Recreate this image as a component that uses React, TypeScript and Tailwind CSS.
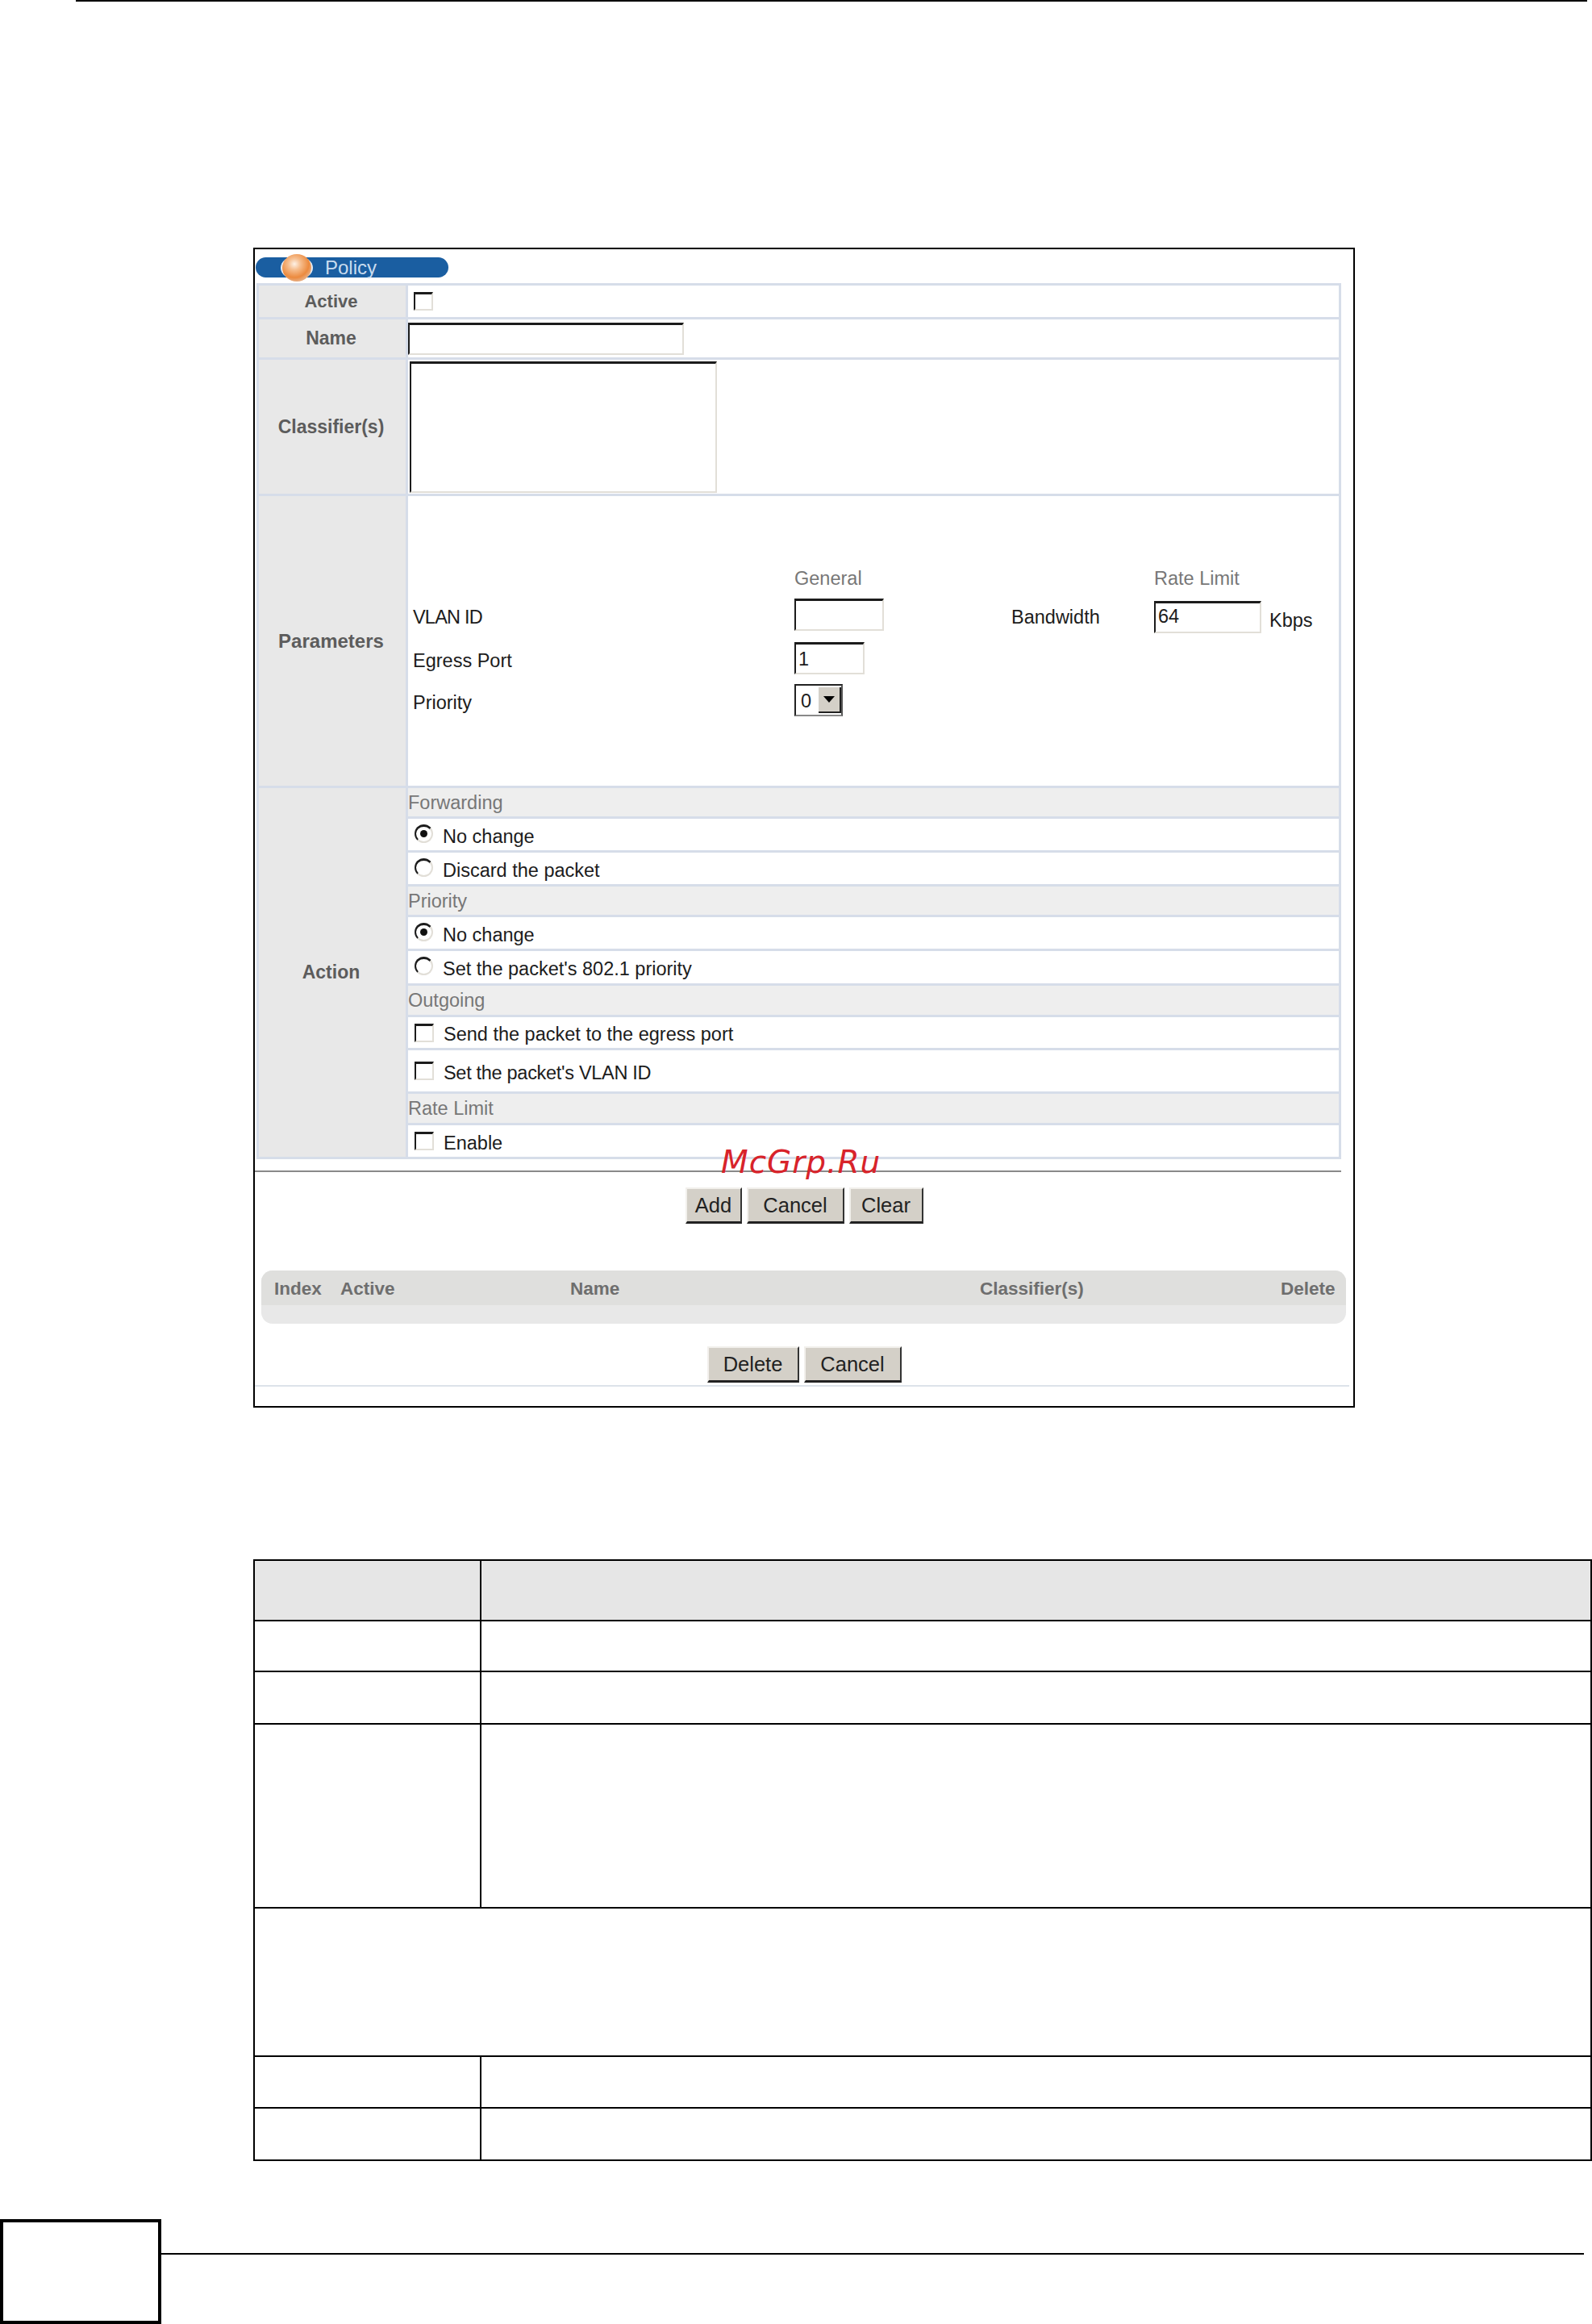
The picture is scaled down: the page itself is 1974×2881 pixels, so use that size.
const rowText = "mt-[6px] text-[23.5px] text-[#1c1c1c]";

const insetBorder = "border-2 border-t-[3px] border-t-[#1c1c1c] border-l-[#1c1c1c] border-r-[#e2dfd8] border-b-[#e2dfd8] bg-white";

function Label({ text, size = "text-[23px]" }: { text: string; size?: string }) {
  return (
    <div className={`flex w-[182px] shrink-0 items-center justify-center bg-[#e8e8e8] pr-[3px] font-bold text-[#5c5c5c] ${size}`}>
      {text}
    </div>
  );
}

function Checkbox() {
  return <div className={`h-[23px] w-[24px] shrink-0 ${insetBorder}`} />;
}

function Radio({ checked = false }: { checked?: boolean }) {
  return (
    <div className={`mb-[3px] flex h-[23px] w-[23px] shrink-0 items-center justify-center rounded-full ${insetBorder}`}>
      {checked && <div className="h-[9px] w-[9px] rounded-full bg-[#111111]" />}
    </div>
  );
}

function ActionHeader({ text, h }: { text: string; h: string }) {
  return <div className={`flex items-center bg-[#eeeeee] pt-[2px] text-[23.5px] text-[#777777] ${h}`}>{text}</div>;
}

function ActionOption({ text, h, radio, checked, tight }: { text: string; h: string; radio?: boolean; checked?: boolean; tight?: boolean }) {
  return (
    <div className={`flex items-center gap-[12px] bg-white pl-[8px] ${h}`}>
      {radio ? <Radio checked={checked} /> : <Checkbox />}
      <span className={`${rowText} ${tight ? "tracking-[-0.3px]" : ""}`}>{text}</span>
    </div>
  );
}

function TextBox({ w, value, low }: { w: string; value?: string; low?: boolean }) {
  return (
    <div className={`flex h-[40px] items-center pl-[3px] text-[23.5px] leading-none text-[#1c1c1c] ${low ? "pt-[3px]" : ""} ${w} ${insetBorder}`}>
      {value}
    </div>
  );
}

function FormButton({ text, w }: { text: string; w: string }) {
  return (
    <div className={`flex h-[45px] items-center justify-center border-t-2 border-r-2 border-b-[3px] border-l-2 border-t-[#f2f0ec] border-r-[#333333] border-b-[#222222] border-l-[#f2f0ec] bg-[#d4d0c8] text-[25.5px] text-[#222222] ${w}`}>
      {text}
    </div>
  );
}

function PolicyBall() {
  return (
    <svg width="40" height="34" viewBox="0 0 40 34" className="-my-[5px] shrink-0">
      <defs>
        <radialGradient id="ball" cx="0.42" cy="0.36" r="0.62">
          <stop offset="0" stopColor="#fdf1e6" />
          <stop offset="0.35" stopColor="#f6bd8d" />
          <stop offset="0.8" stopColor="#ec8a3e" />
          <stop offset="1" stopColor="#e8a878" />
        </radialGradient>
      </defs>
      <ellipse cx="20" cy="17" rx="20" ry="15" fill="#e6edf5" />
      <ellipse cx="20" cy="17" rx="18" ry="17" fill="url(#ball)" />
    </svg>
  );
}

const specRows = [
  { h: "h-[75px]", header: true },
  { h: "h-[63px]" },
  { h: "h-[65px]" },
  { h: "h-[228px]" },
  { h: "h-[184px]", span: true },
  { h: "h-[64px]" },
  { h: "h-[63px]", last: true },
];

export default function App() {
  return (
    <div className="flex h-[2881px] w-[1974px] flex-col overflow-hidden bg-white font-['Liberation_Sans',Arial,sans-serif]">
      {/* Page rule */}
      <div className="ml-[94px] h-[2px] w-[1874px] shrink-0 bg-black" />

      {/* Screenshot frame */}
      <div className="relative mt-[305px] ml-[314px] flex h-[1438px] w-[1366px] shrink-0 flex-col border-2 border-black">
        <div className="mt-[10px] ml-[1px] flex h-[25px] w-[239px] items-center rounded-full bg-[#1a5ea1] pl-[31px]">
          <PolicyBall />
          <span className="ml-[15px] text-[24px] leading-none text-[#c9dcef]">Policy</span>
        </div>

        {/* Policy form */}
        <div className="mt-[7px] ml-[2px] flex w-[1345px] flex-col gap-[3px] bg-[#d6dde9] p-[3px]">
          <div className="flex h-[39px] gap-[3px]">
            <Label text="Active" size="text-[22px]" />
            <div className="flex flex-1 items-center bg-white pl-[7px]">
              <Checkbox />
            </div>
          </div>
          <div className="flex h-[47px] gap-[3px]">
            <Label text="Name" />
            <div className="flex flex-1 items-center bg-white">
              <TextBox w="w-[342px]" />
            </div>
          </div>
          <div className="flex h-[166px] gap-[3px]">
            <Label text="Classifier(s)" />
            <div className="flex flex-1 items-center bg-white pl-[2px]">
              <div className={`h-[163px] w-[381px] ${insetBorder}`} />
            </div>
          </div>
          <div className="flex h-[359px] gap-[3px]">
            <Label text="Parameters" size="text-[24px]" />
            <div className="grid flex-1 grid-cols-[473px_269px_177px_1fr] grid-rows-[46px_54px_52px_40px] items-start bg-white pt-[81px] pl-[6px] text-[23.5px] text-[#1c1c1c]">
              <div />
              <div className="flex h-[42px] items-center pt-[2px] text-[#777777]">General</div>
              <div />
              <div className="flex h-[42px] items-center pt-[2px] text-[#777777]">Rate Limit</div>

              <div className="flex h-[44px] items-center pt-[4px] tracking-[-0.8px]">VLAN ID</div>
              <TextBox w="w-[111px]" />
              <div className="flex h-[44px] items-center pt-[4px]">Bandwidth</div>
              <div className="flex items-center gap-[10px]">
                <TextBox w="w-[133px]" value="64" />
                <span className="mt-[10px]">Kbps</span>
              </div>

              <div className="flex h-[44px] items-center pt-[4px]">Egress Port</div>
              <TextBox w="w-[87px]" value="1" low />
              <div />
              <div />

              <div className="flex h-[44px] items-center pt-[4px]">Priority</div>
              <div className="flex h-[40px] w-[60px] items-center justify-between border-2 border-t-[#222222] border-r-[#555555] border-b-[#888888] border-l-[#222222] bg-white pl-[6px]">
                <span className="pt-[3px] leading-none">0</span>
                <div className="flex h-[32px] w-[28px] items-center justify-center border-r-2 border-b-2 border-r-[#222222] border-b-[#222222] bg-[#d4d0c8]">
                  <div className="h-0 w-0 border-x-[7px] border-t-[8px] border-x-transparent border-t-black" />
                </div>
              </div>
              <div />
              <div />
            </div>
          </div>
          <div className="flex gap-[3px]">
            <Label text="Action" />
            <div className="flex flex-1 flex-col gap-[3px]">
              <ActionHeader text="Forwarding" h="h-[35px]" />
              <ActionOption text="No change" h="h-[39px]" radio checked />
              <ActionOption text="Discard the packet" h="h-[39px]" radio />
              <ActionHeader text="Priority" h="h-[35px]" />
              <ActionOption text="No change" h="h-[39px]" radio checked />
              <ActionOption text="Set the packet's 802.1 priority" h="h-[40px]" radio />
              <ActionHeader text="Outgoing" h="h-[36px]" />
              <ActionOption text="Send the packet to the egress port" h="h-[38px]" />
              <ActionOption text="Set the packet's VLAN ID" h="h-[51px]" tight />
              <ActionHeader text="Rate Limit" h="h-[36px]" />
              <ActionOption text="Enable" h="h-[39px]" />
            </div>
          </div>
        </div>

        <div className="mt-[14px] h-[2px] w-[1347px] shrink-0 bg-[#8a8a8a]" />

        <div className="mt-[19px] flex justify-center gap-[6px]">
          <FormButton text="Add" w="w-[70px]" />
          <FormButton text="Cancel" w="w-[121px]" />
          <FormButton text="Clear" w="w-[92px]" />
        </div>

        {/* Policy list */}
        <div className="mt-[58px] ml-[8px] w-[1345px] overflow-hidden rounded-[14px] bg-[#e8e8e8]">
          <div className="grid h-[43px] grid-cols-[82px_285px_508px_373px_1fr] items-center bg-[#dfdfdd] pt-[2px] pl-[16px] text-[22.5px] font-bold text-[#6e6e6e]">
            <span>Index</span>
            <span>Active</span>
            <span>Name</span>
            <span>Classifier(s)</span>
            <span>Delete</span>
          </div>
          <div className="h-[23px]" />
        </div>

        <div className="mt-[28px] flex justify-center gap-[6px]">
          <FormButton text="Delete" w="w-[114px]" />
          <FormButton text="Cancel" w="w-[121px]" />
        </div>

        <div className="mt-[3px] h-[2px] w-[1357px] shrink-0 bg-[#dde3ea]" />

        {/* Watermark */}
        <div className="absolute top-[1112px] left-[578px] font-['DejaVu_Sans',sans-serif] text-[39px] leading-none tracking-[1px] text-[#d8232a] italic">
          McGrp.Ru
        </div>
      </div>

      {/* Field description table */}
      <div className="mt-[188px] ml-[314px] flex w-[1660px] shrink-0 flex-col border-2 border-black">
        {specRows.map((row, i) => (
          <div key={i} className={`flex ${row.h} ${row.last ? "" : "border-b-2 border-black"} ${row.header ? "bg-[#e6e6e6]" : ""}`}>
            {!row.span && <div className="w-[281px] shrink-0 border-r-2 border-black" />}
          </div>
        ))}
      </div>

      {/* Page footer */}
      <div className="mt-[72px] flex shrink-0 items-start">
        <div className="h-[130px] w-[200px] shrink-0 border-4 border-black" />
        <div className="mt-[42px] h-[2px] w-[1764px] bg-black" />
      </div>
    </div>
  );
}
